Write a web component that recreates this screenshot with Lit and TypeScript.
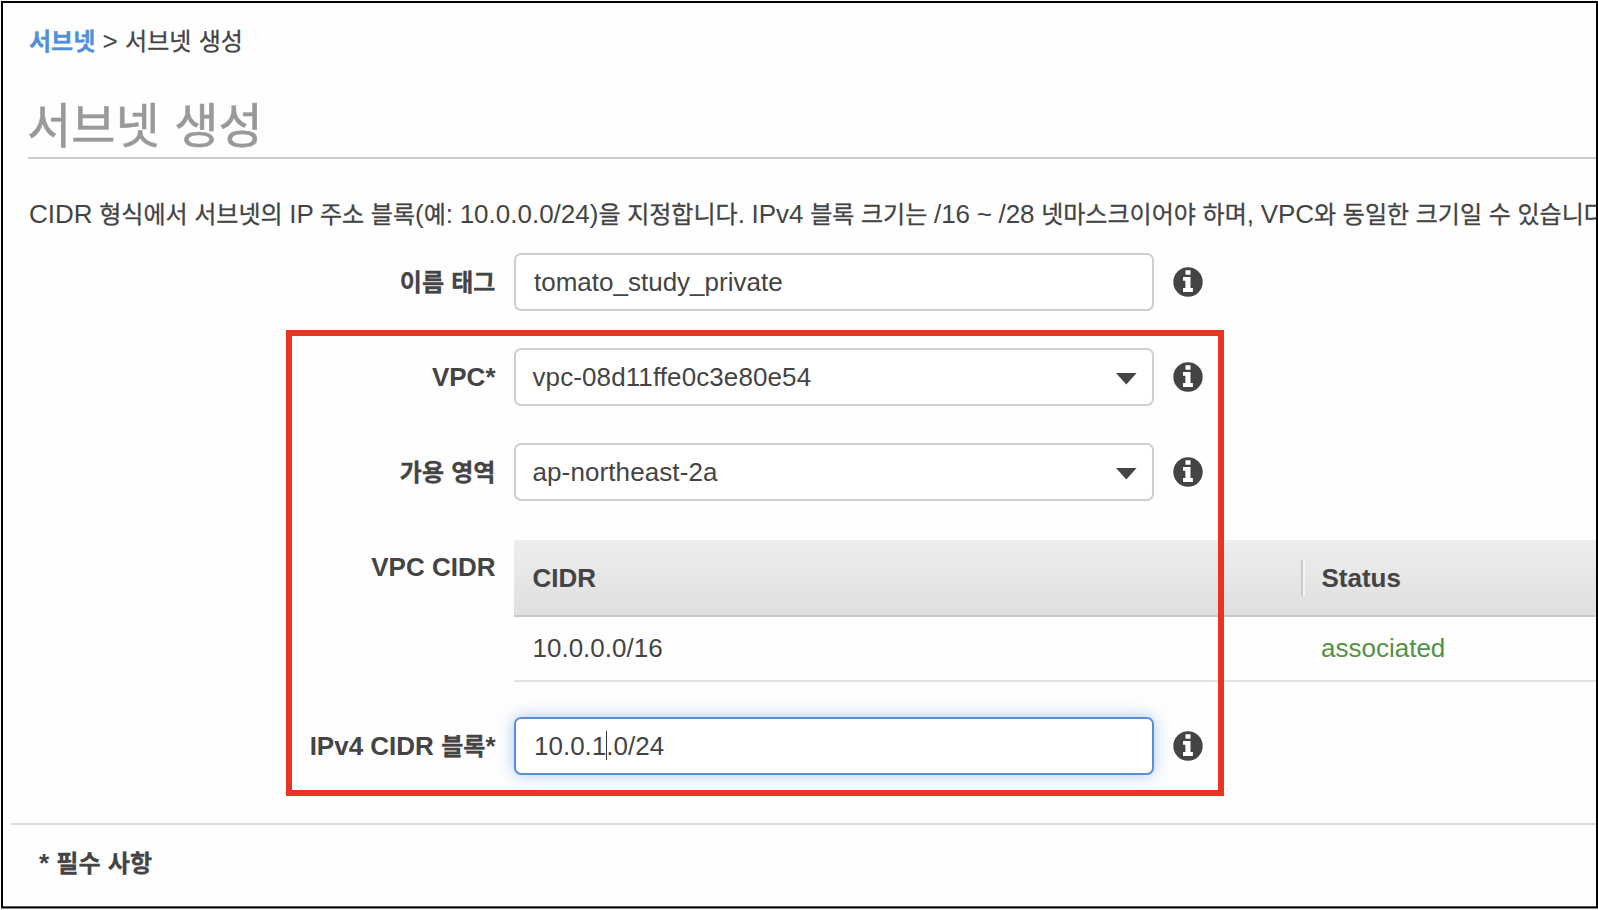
import { LitElement, html, css, svg, nothing } from 'lit';
import { customElement, property } from 'lit/decorators.js';
import { classMap } from 'lit/directives/class-map.js';

// Hangul runs get their own span so they can be sized apart from latin text
const mixed = (text: string) =>
  text
    .split(/([\uac00-\ud7a3]+)/)
    .map((part, i) => (i % 2 ? html`<span class="ko">${part}</span>` : part));

const textStyles = css`
  :host {
    font-family: 'Liberation Sans', 'Noto Sans CJK KR', sans-serif;
    font-size: 26px;
    line-height: 30px;
    color: #444;
  }
  .ko {
    font-family: 'Noto Sans CJK KR', sans-serif;
    font-size: 0.925em;
    line-height: 1;
    -webkit-text-stroke: 0.012em currentColor;
  }
`;

@customElement('info-icon')
export class InfoIcon extends LitElement {
  render() {
    return svg`<svg width="30" height="30" viewBox="0 0 30 30">
      <circle cx="15" cy="15" r="14.7" fill="#444" />
      <path
        fill="#fff"
        d="M12.5 3.3h5v4.5h-5zM10 10h7.5v11.1h2.4v3.8H10v-3.8h2.4v-7.3H10z"
      />
    </svg>`;
  }

  static styles = css`
    :host {
      display: block;
      height: 30px;
    }
    svg {
      display: block;
    }
  `;
}

@customElement('form-row')
export class FormRow extends LitElement {
  @property() label = '';
  @property() value = '';
  @property() kind: 'text' | 'select' | 'focus' = 'text';
  // number of characters in front of the text cursor
  @property({ type: Number }) cursor = 0;

  render() {
    const before = this.value.slice(0, this.cursor);
    const after = this.value.slice(this.cursor);
    return html`
      <div class="row">
        <div class="label">${mixed(this.label)}</div>
        <div class=${classMap({ field: true, [this.kind]: true })}>
          <span class="value"
            >${before}${this.kind === 'focus'
              ? html`<i class="cursor"></i>`
              : nothing}${after}</span
          >
          ${this.kind === 'select'
            ? html`<svg width="21" height="12" viewBox="0 0 21 12">
                <path fill="#444" d="M0 0h20.6L10.3 11.6z" />
              </svg>`
            : nothing}
        </div>
        <info-icon class="info"></info-icon>
      </div>
    `;
  }

  static styles = [
    textStyles,
    css`
      :host {
        display: block;
      }
      .row {
        display: grid;
        grid-template-columns: 492.5px 640px 30px;
        column-gap: 18.5px;
        align-items: center;
      }
      .label {
        font-weight: 700;
        text-align: right;
        white-space: nowrap;
        height: 30px;
      }
      .field {
        box-sizing: border-box;
        display: flex;
        align-items: center;
        justify-content: space-between;
        height: 58px;
        padding: 0 15px 0 18px;
        border: 2px solid #cfcfcf;
        border-radius: 7px;
        background: #fff;
      }
      .select {
        padding-left: 16.5px;
        letter-spacing: 0.1px;
      }
      .select svg {
        margin-top: 3px;
      }
      .focus {
        border-color: #5a8fd8;
        box-shadow: 0 0 16px rgba(82, 143, 216, 0.5);
      }
      .value {
        white-space: nowrap;
      }
      .cursor {
        display: inline-block;
        width: 1.5px;
        height: 29px;
        margin: 0 -1px 0 -0.5px;
        vertical-align: -5px;
        background: #333;
      }
    `
  ];
}

@customElement('cidr-table')
export class CidrTable extends LitElement {
  rows = [{ cidr: '10.0.0.0/16', status: 'associated' }];

  render() {
    return html`
      <div class="head">
        <div class="cell">CIDR</div>
        <div class="cell status">Status</div>
      </div>
      ${this.rows.map(
        (row) => html`<div class="body">
          <div class="cell">${row.cidr}</div>
          <div class="cell ok">${row.status}</div>
        </div>`
      )}
    `;
  }

  static styles = [
    textStyles,
    css`
      :host {
        display: block;
      }
      .head,
      .body {
        box-sizing: border-box;
        display: grid;
        grid-template-columns: 787px 1fr;
        align-items: center;
      }
      .head {
        height: 77px;
        padding-top: 1px;
        border-bottom: 2px solid #c9c9c9;
        background: linear-gradient(#eee, #dfdfdf);
        font-weight: 700;
      }
      .body {
        height: 65px;
        padding-bottom: 1px;
        border-bottom: 2px solid #e2e2e2;
      }
      .cell {
        padding-left: 18.5px;
      }
      .status {
        line-height: 36px;
        border-left: 2px solid #c8c8c8;
        box-shadow: inset 2px 0 #f7f7f7;
      }
      .ok {
        padding-left: 20px;
        color: #529147;
      }
    `
  ];
}

@customElement('app-root')
export class AppRoot extends LitElement {
  render() {
    return html`
      <div class="frame">
        <nav class="crumbs">
          <a class="link">${mixed('서브넷')}</a> &gt; ${mixed('서브넷 생성')}
        </nav>
        <h1 class="title">${mixed('서브넷 생성')}</h1>
        <p class="intro">
          ${mixed(
            'CIDR 형식에서 서브넷의 IP 주소 블록(예: 10.0.0.0/24)을 지정합니다. IPv4 블록 크기는 /16 ~ /28 넷마스크이어야 하며, VPC와 동일한 크기일 수 있습니다.'
          )}
        </p>
        <div class="form">
          <form-row label="이름 태그" value="tomato_study_private"></form-row>
          <form-row
            label="VPC*"
            kind="select"
            value="vpc-08d11ffe0c3e80e54"
          ></form-row>
          <form-row
            label="가용 영역"
            kind="select"
            value="ap-northeast-2a"
          ></form-row>
          <div class="table-row">
            <div class="table-label">VPC CIDR</div>
            <cidr-table></cidr-table>
          </div>
          <form-row
            label="IPv4 CIDR 블록*"
            kind="focus"
            value="10.0.1.0/24"
            cursor="6"
          ></form-row>
        </div>
        <footer class="footer">${mixed('* 필수 사항')}</footer>
        <div class="highlight"></div>
      </div>
    `;
  }

  static styles = [
    textStyles,
    css`
      :host {
        display: block;
        height: 910px;
        padding: 1px 0 0 1px;
        box-sizing: border-box;
        overflow: hidden;
        background: #fff;
      }
      .frame {
        position: relative;
        box-sizing: border-box;
        height: 907px;
        border: 2px solid #000;
        border-bottom-width: 1px;
        box-shadow: inset 0 -1px #555, 0 1px #888;
        overflow: hidden;
        background: #fefefe;
      }
      .crumbs {
        height: 30px;
        margin: 23px 0 0 26px;
        white-space: nowrap;
      }
      .link {
        font-weight: 700;
        color: #528fd8;
      }
      .title {
        height: 66px;
        margin: 35px 0 0 25px;
        border-bottom: 2px solid #ccc;
        font-size: 52px;
        font-weight: 400;
        line-height: 68px;
        text-indent: -1px;
        white-space: nowrap;
        color: #999;
      }
      .intro {
        height: 30px;
        margin: 40px 0 0 26px;
        word-spacing: -0.65px;
        white-space: nowrap;
      }
      .form {
        display: flex;
        flex-direction: column;
        gap: 37px;
        margin-top: 24px;
      }
      .table-row {
        display: grid;
        grid-template-columns: 492.5px 1fr;
        column-gap: 18.5px;
        margin: 2px 0 -2px;
      }
      .table-label {
        padding-top: 12px;
        font-weight: 700;
        text-align: right;
      }
      .footer {
        margin: 48px 0 0 8px;
        padding: 23px 0 0 28px;
        border-top: 2px solid #ddd;
        font-weight: 700;
      }
      .highlight {
        position: absolute;
        left: 283px;
        top: 327px;
        width: 938px;
        height: 466px;
        box-sizing: border-box;
        border: 6px solid #ea3323;
        pointer-events: none;
      }
    `
  ];
}
